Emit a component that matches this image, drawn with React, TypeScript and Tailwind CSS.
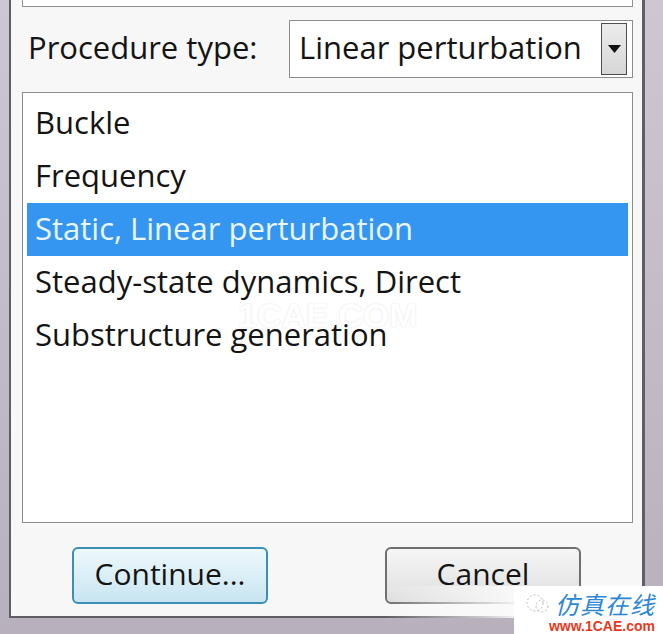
const items = [
  'Buckle',
  'Frequency',
  'Static, Linear perturbation',
  'Steady-state dynamics, Direct',
  'Substructure generation',
];

const App: React.FC = () => {
  const selected = 2;

  return (
    <div className="relative w-[663px] h-[634px] overflow-hidden bg-gradient-to-b from-[#cfc6d3] to-[#b9b0be] font-['Open_Sans',sans-serif] text-[#141414]">
      {/* dialog body */}
      <div className="ml-[9px] w-[636px] h-[618px] flex flex-col bg-[#f7f7f7] border-l-2 border-r-[3px] border-b-2 border-[#5f5f63] pl-[11px] pr-[9px]">
        {/* cut-off panel above */}
        <div className="h-[7px] bg-white border-x border-b border-[#8f9092]" />

        {/* procedure type row */}
        <div className="mt-[13px] h-[58px] flex items-center">
          <span className="w-[267px] pl-[6px] text-[31px] leading-none pb-[4px] whitespace-nowrap">Procedure type:</span>
          <div className="flex-1 h-full flex items-center bg-white border border-[#8b8c8e] pl-[9px] pr-[5px]">
            <span className="flex-1 text-[31px] leading-none pb-[4px] whitespace-nowrap">Linear perturbation</span>
            <div className="w-[26px] h-[52px] flex items-center justify-center border border-[#4e4e4e] bg-gradient-to-b from-[#ececec] to-[#d6d6d6]">
              <svg width="13" height="8" viewBox="0 0 13 8">
                <path d="M0 0 H13 L6.5 8 Z" fill="#111" />
              </svg>
            </div>
          </div>
        </div>

        {/* list */}
        <div className="relative mt-[14px] h-[431px] bg-white border border-[#8b8c8e] p-[4px] flex flex-col">
          {/* faint watermark behind the items */}
          <div className="absolute left-[215px] top-[211px] text-[34px] leading-[22px] font-bold text-white [text-shadow:0_0_2px_rgba(0,0,0,0.14)] font-['Liberation_Sans',sans-serif]">
            1CAE.COM
          </div>
          {items.map((item, i) => (
            <div
              key={item}
              className={
                i === selected
                  ? 'relative h-[53px] flex items-center pl-[8px] bg-[#3496f0] text-[#eaf6ff]'
                  : 'relative h-[53px] flex items-center pl-[8px]'
              }
            >
              <span className="text-[31px] leading-none pb-[3px] whitespace-nowrap">{item}</span>
            </div>
          ))}
        </div>

        {/* buttons */}
        <div className="mt-[24px] flex">
          <button className="ml-[50px] w-[196px] h-[57px] rounded-[6px] border-2 border-[#3a8fb3] bg-gradient-to-b from-[#eef8fc] to-[#c8e5f1] text-[30px] leading-none pb-[4px]">
            Continue...
          </button>
          <button className="ml-[117px] w-[196px] h-[57px] rounded-[6px] border-2 border-[#6f6f6f] bg-gradient-to-b from-[#f6f6f6] to-[#dedede] text-[30px] leading-none pb-[4px]">
            Cancel
          </button>
        </div>
      </div>

      {/* bottom-right watermark */}
      <div className="absolute left-[385px] top-[586px] w-[140px] h-[32px] bg-gradient-to-r from-[#f6f6f6]/0 to-[#fafafa]" />
      <div className="absolute left-[514px] top-[586px] right-0 bottom-0 bg-white flex flex-col items-end pr-[8px] pt-[4px]">
        <div className="flex items-center gap-[4px] h-[28px]">
          <svg width="26" height="22" viewBox="0 0 26 22">
            <circle cx="10" cy="10" r="8" fill="none" stroke="#bbb" strokeWidth="1" strokeDasharray="2 2" />
            <circle cx="17" cy="13" r="6" fill="none" stroke="#bbb" strokeWidth="1" strokeDasharray="2 2" />
          </svg>
          <span className="text-[24px] leading-[24px] italic text-[#2b86d6] font-['Noto_Sans_CJK_SC',sans-serif] tracking-[1px]">
            仿真在线
          </span>
        </div>
        <span className="mt-[1px] text-[14px] leading-[14px] font-bold text-[#e63a1e] font-['Liberation_Sans',sans-serif]">
          www.1CAE.com
        </span>
      </div>
    </div>
  );
};

export default App;
